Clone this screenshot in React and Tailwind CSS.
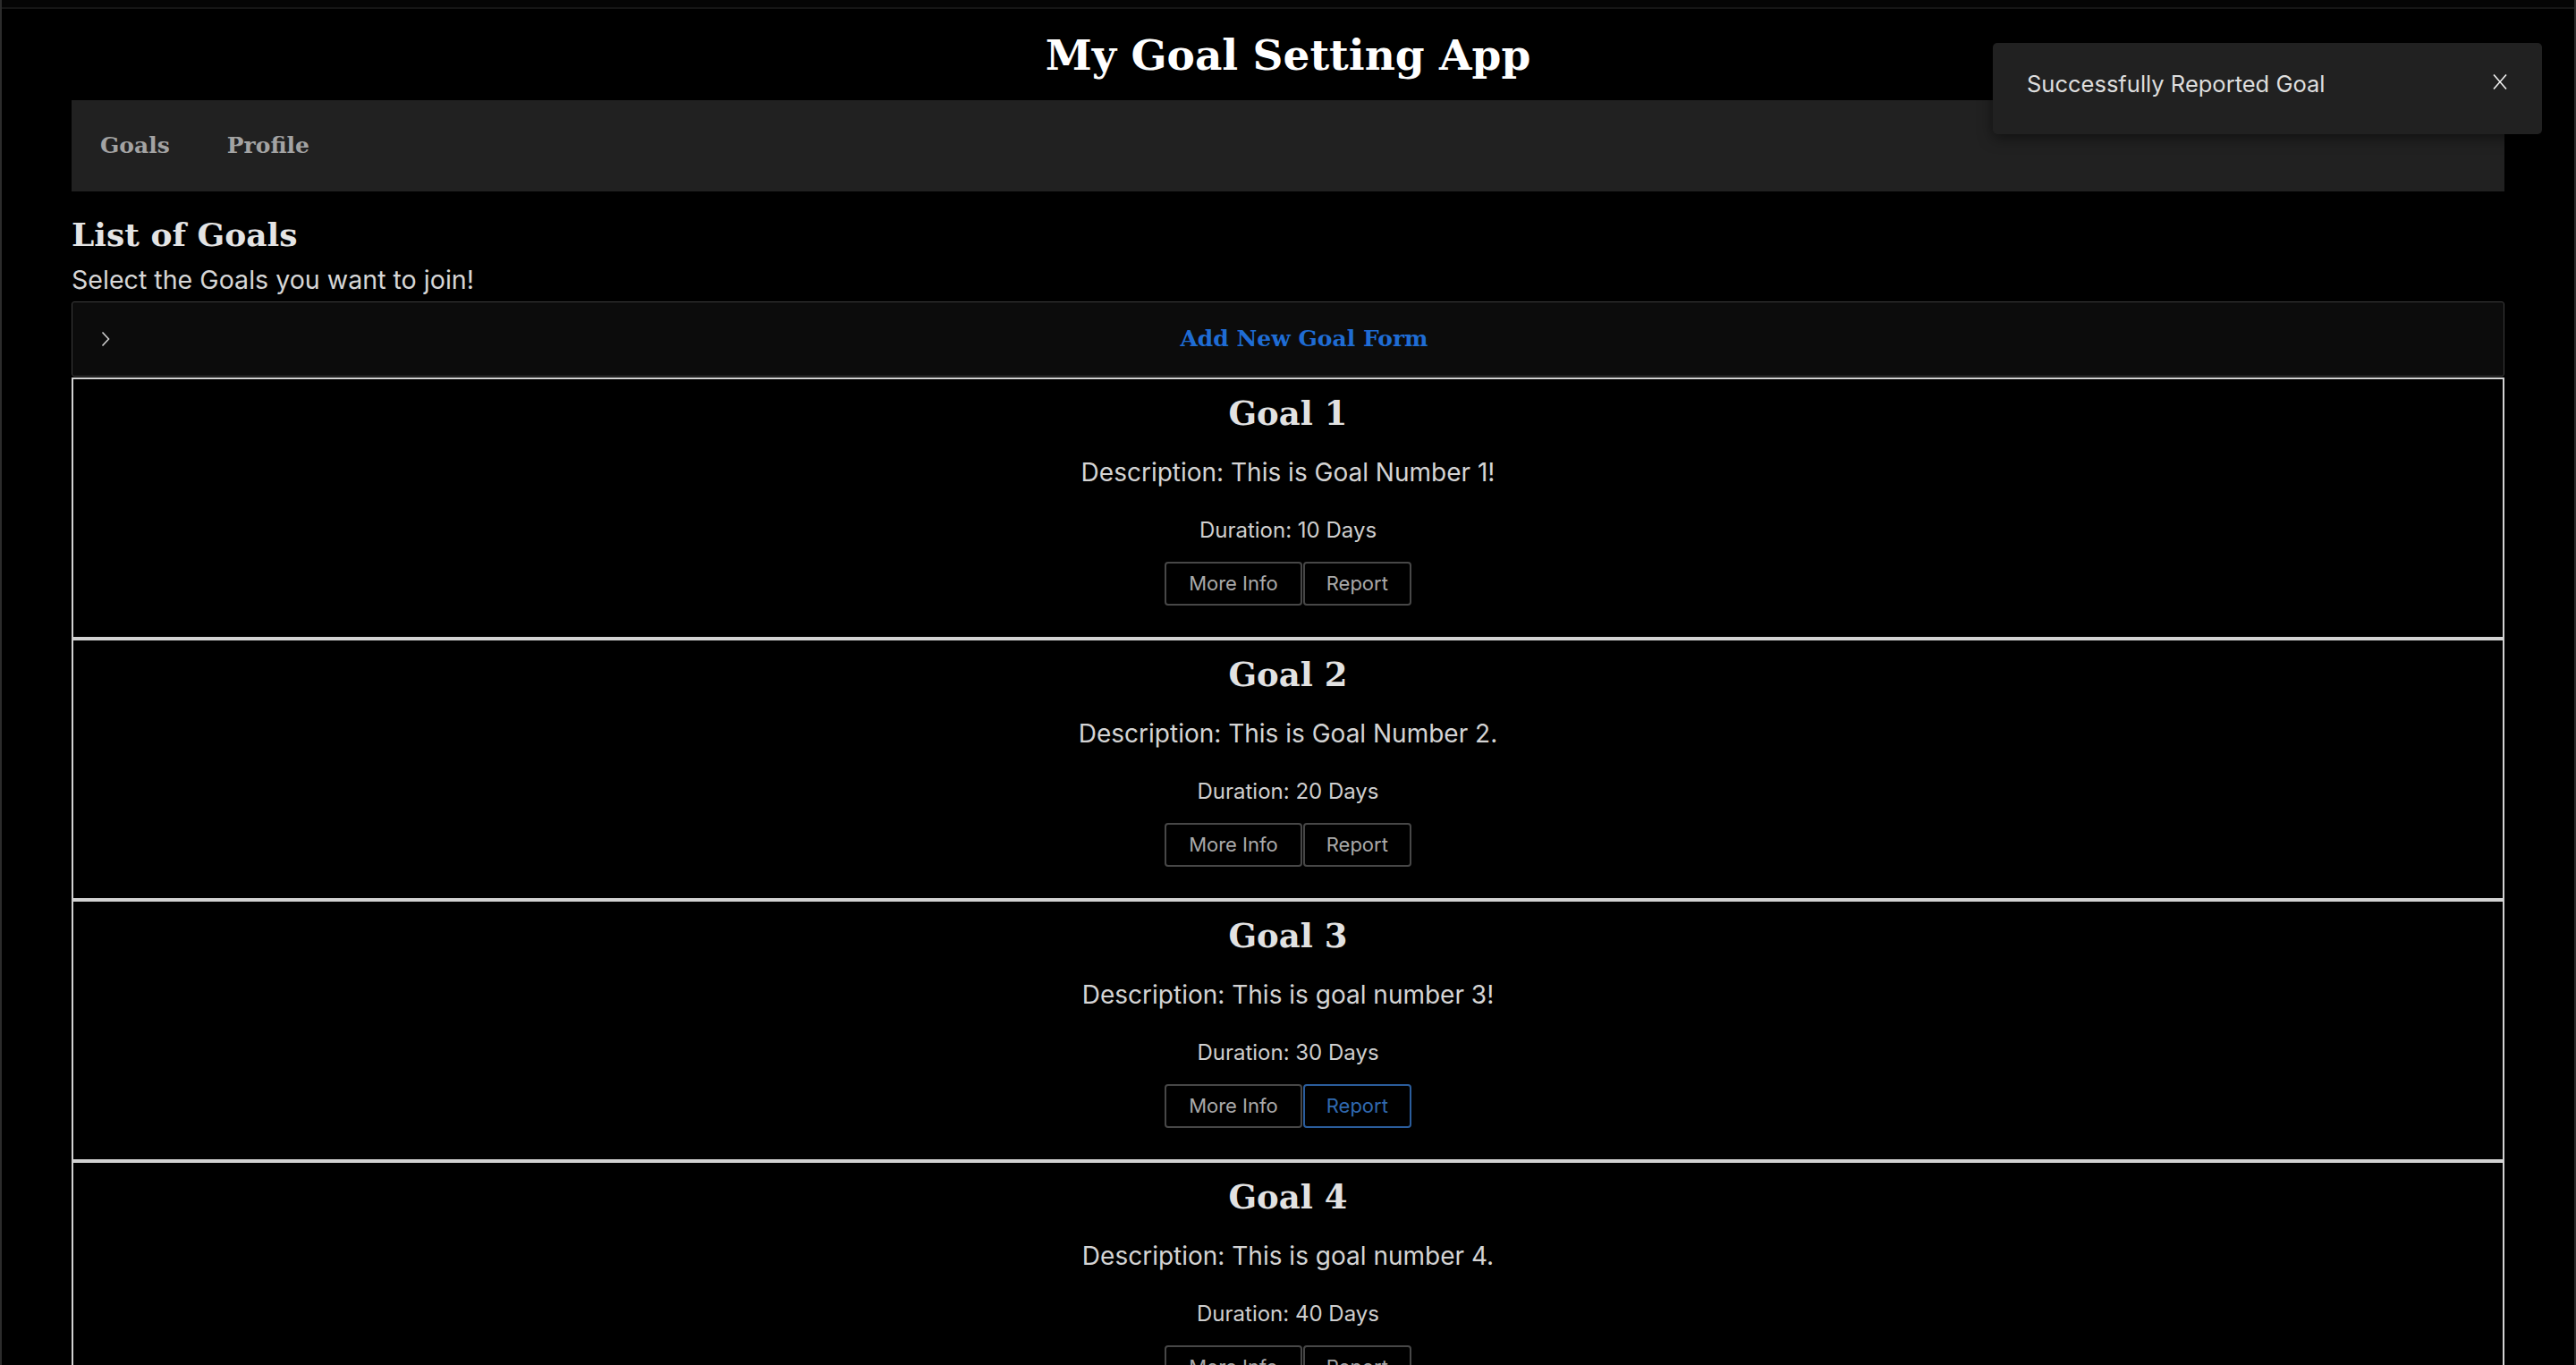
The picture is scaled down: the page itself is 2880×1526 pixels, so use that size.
import React from "react";

const goals = [
  { id: 1, desc: "Description: This is Goal Number 1!", days: 10 },
  { id: 2, desc: "Description: This is Goal Number 2.", days: 20 },
  { id: 3, desc: "Description: This is goal number 3!", days: 30, active: true },
  { id: 4, desc: "Description: This is goal number 4.", days: 40 },
  { id: 5, desc: "Description: This is goal number 5.", days: 50 },
];

function GoalCard({ goal }) {
  return (
    <div className="h-[292px] border-2 border-[#d2d2d2] flex flex-col items-center pt-[20px]">
      <h3 className="font-['DejaVu_Serif',serif] font-bold text-[37px] leading-none text-[#e2e2e2]">
        Goal {goal.id}
      </h3>
      <p className="mt-[33px] font-['Inter',sans-serif] text-[28px] leading-none text-[#d4d4d4]">
        {goal.desc}
      </p>
      <p className="mt-[39px] font-['Inter',sans-serif] text-[24px] leading-none text-[#cfcfcf]">
        Duration: {goal.days} Days
      </p>
      <div className="mt-[23px] flex gap-px font-['Inter',sans-serif] text-[22px]">
        <button className="h-[49px] px-[25px] border-2 border-[#474747] rounded-[4px] text-[#a9a9a9] bg-black">
          More Info
        </button>
        <button
          className={
            goal.active
              ? "h-[49px] px-[24px] border-2 border-[#2b5d9c] rounded-[4px] text-[#3069b0] bg-black"
              : "h-[49px] px-[24px] border-2 border-[#474747] rounded-[4px] text-[#a9a9a9] bg-black"
          }
        >
          Report
        </button>
      </div>
    </div>
  );
}

export default function App() {
  return (
    <div className="relative h-[1526px] overflow-hidden bg-black border-x-2 border-[#2c2c2c]">
      <div className="h-[8px] bg-[#050505]" />
      <div className="h-[2px] bg-[#161616]" />
      <div className="px-[78px]">
        <div className="h-[102px] flex items-center justify-center">
          <h1 className="font-['DejaVu_Serif',serif] font-bold text-[47px] leading-none text-white">
            My Goal Setting App
          </h1>
        </div>
        <nav className="h-[102px] bg-[#212121] flex items-center">
          <a className="px-8 font-['DejaVu_Serif',serif] font-bold text-[25px] text-[#a3a3a3]">Goals</a>
          <a className="px-8 font-['DejaVu_Serif',serif] font-bold text-[25px] text-[#a3a3a3]">Profile</a>
        </nav>
        <h2 className="mt-[30px] font-['DejaVu_Serif',serif] font-bold text-[36px] leading-none text-[#e4e4e4]">
          List of Goals
        </h2>
        <p className="mt-[19px] font-['Inter',sans-serif] text-[28.6px] leading-none text-[#d6d6d6]">
          Select the Goals you want to join!
        </p>
        <div className="mt-[9px] h-[84px] border border-[#3c3c3c] rounded-[3px] bg-[#0c0c0c] flex items-center px-[32px]">
          <svg width="10" height="18" viewBox="0 0 10 18" className="shrink-0">
            <path d="M1.5 1.5 L8.5 9 L1.5 16.5" fill="none" stroke="#cfcfcf" strokeWidth="1.6" />
          </svg>
          <div className="flex-1 text-center pl-[26px] font-['DejaVu_Serif',serif] font-bold text-[25px] text-[#1f6cd4]">
            Add New Goal Form
          </div>
        </div>
        <div className="mt-px flex flex-col">
          {goals.map((g) => (
            <GoalCard key={g.id} goal={g} />
          ))}
        </div>
      </div>

      <div className="absolute top-[48px] right-[36px] w-[614px] h-[102px] bg-[#212121] rounded-[5px] shadow-[0_4px_16px_rgba(0,0,0,0.5)] flex items-start justify-between pt-[33px] pl-[38px] pr-[39px]">
        <span className="font-['Inter',sans-serif] text-[25.5px] leading-none text-[#dedede]">
          Successfully Reported Goal
        </span>
        <svg width="16" height="17" viewBox="0 0 16 17" className="mt-[2px]">
          <path d="M1 0.5 L15 16.5 M15 0.5 L1 16.5" stroke="#f2f2f2" strokeWidth="1.6" fill="none" />
        </svg>
      </div>
    </div>
  );
}
